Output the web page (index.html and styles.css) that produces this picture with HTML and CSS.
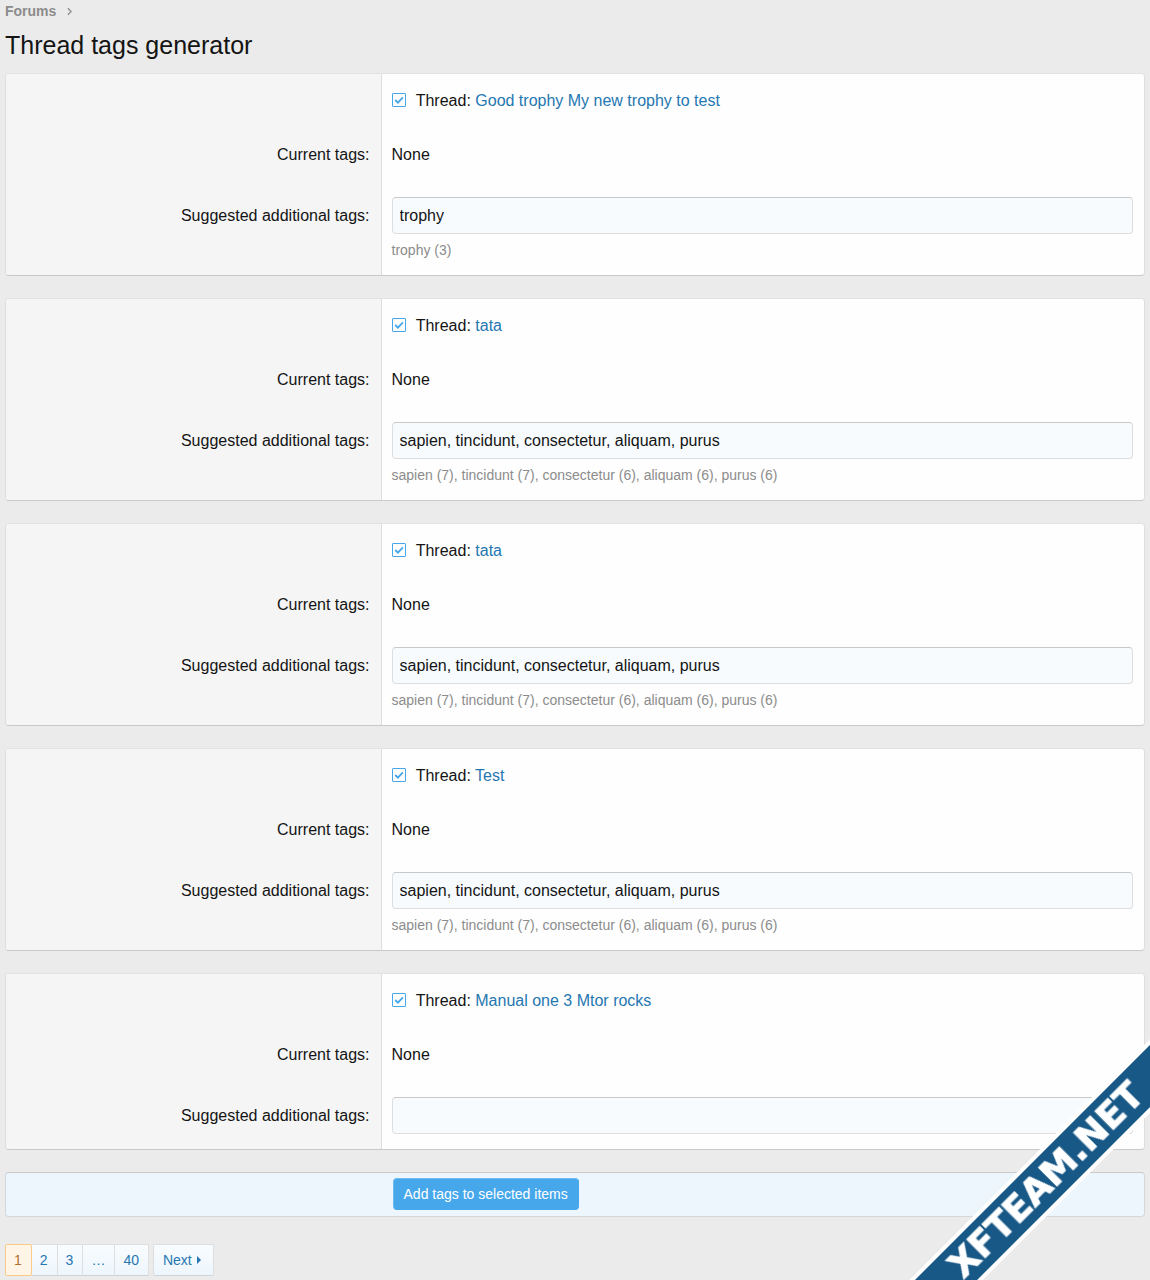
FILE: index.html
```html
<!DOCTYPE html>
<html lang="en">
<head>
<meta charset="UTF-8">
<meta name="viewport" content="width=device-width, initial-scale=1.0">
<title>Thread tags generator</title>
<link rel="stylesheet" href="styles.css">
</head>
<body>
<nav class="breadcrumb">
    <a href="#">Forums</a>
    <svg class="chevron" viewBox="0 0 6 10" aria-hidden="true"><path d="M1 1l4 4-4 4"/></svg>
</nav>
<h1 class="page-title">Thread tags generator</h1>

<form class="tag-form">
    <section class="block">
        <div class="row">
            <div class="row-label"></div>
            <div class="row-value">
                <input class="check" type="checkbox" id="thread1" checked>
                <label for="thread1">Thread: <a href="#">Good trophy My new trophy to test</a></label>
            </div>
        </div>
        <div class="row">
            <div class="row-label">Current tags:</div>
            <div class="row-value">None</div>
        </div>
        <div class="row row-input">
            <div class="row-label"><label for="tags1">Suggested additional tags:</label></div>
            <div class="row-value">
                <input class="input" type="text" id="tags1" value="trophy">
                <div class="hint">trophy (3)</div>
            </div>
        </div>
    </section>

    <section class="block">
        <div class="row">
            <div class="row-label"></div>
            <div class="row-value">
                <input class="check" type="checkbox" id="thread2" checked>
                <label for="thread2">Thread: <a href="#">tata</a></label>
            </div>
        </div>
        <div class="row">
            <div class="row-label">Current tags:</div>
            <div class="row-value">None</div>
        </div>
        <div class="row row-input">
            <div class="row-label"><label for="tags2">Suggested additional tags:</label></div>
            <div class="row-value">
                <input class="input" type="text" id="tags2" value="sapien, tincidunt, consectetur, aliquam, purus">
                <div class="hint">sapien (7), tincidunt (7), consectetur (6), aliquam (6), purus (6)</div>
            </div>
        </div>
    </section>

    <section class="block">
        <div class="row">
            <div class="row-label"></div>
            <div class="row-value">
                <input class="check" type="checkbox" id="thread3" checked>
                <label for="thread3">Thread: <a href="#">tata</a></label>
            </div>
        </div>
        <div class="row">
            <div class="row-label">Current tags:</div>
            <div class="row-value">None</div>
        </div>
        <div class="row row-input">
            <div class="row-label"><label for="tags3">Suggested additional tags:</label></div>
            <div class="row-value">
                <input class="input" type="text" id="tags3" value="sapien, tincidunt, consectetur, aliquam, purus">
                <div class="hint">sapien (7), tincidunt (7), consectetur (6), aliquam (6), purus (6)</div>
            </div>
        </div>
    </section>

    <section class="block">
        <div class="row">
            <div class="row-label"></div>
            <div class="row-value">
                <input class="check" type="checkbox" id="thread4" checked>
                <label for="thread4">Thread: <a href="#">Test</a></label>
            </div>
        </div>
        <div class="row">
            <div class="row-label">Current tags:</div>
            <div class="row-value">None</div>
        </div>
        <div class="row row-input">
            <div class="row-label"><label for="tags4">Suggested additional tags:</label></div>
            <div class="row-value">
                <input class="input" type="text" id="tags4" value="sapien, tincidunt, consectetur, aliquam, purus">
                <div class="hint">sapien (7), tincidunt (7), consectetur (6), aliquam (6), purus (6)</div>
            </div>
        </div>
    </section>

    <section class="block">
        <div class="row">
            <div class="row-label"></div>
            <div class="row-value">
                <input class="check" type="checkbox" id="thread5" checked>
                <label for="thread5">Thread: <a href="#">Manual one 3 Mtor rocks</a></label>
            </div>
        </div>
        <div class="row">
            <div class="row-label">Current tags:</div>
            <div class="row-value">None</div>
        </div>
        <div class="row row-input">
            <div class="row-label"><label for="tags5">Suggested additional tags:</label></div>
            <div class="row-value">
                <input class="input" type="text" id="tags5" value="">
            </div>
        </div>
    </section>

    <div class="submit-bar">
        <div></div>
        <div class="submit-cell"><button class="button" type="submit">Add tags to selected items</button></div>
    </div>
</form>

<nav class="pager">
    <div class="pages">
        <a class="page current" href="#">1</a>
        <a class="page" href="#">2</a>
        <a class="page" href="#">3</a>
        <a class="page" href="#">…</a>
        <a class="page" href="#">40</a>
    </div>
    <a class="next" href="#">Next <svg class="caret" viewBox="0 0 4 8" aria-hidden="true"><path d="M0 0l4 4-4 4z"/></svg></a>
</nav>

<div class="ribbon">XFTEAM.NET</div>
</body>
</html>
```
FILE: styles.css
```css
* {
    box-sizing: border-box;
}
body {
    margin: 0;
    padding: 0 5px;
    background: #ebebeb;
    color: #141414;
    font-family: "Liberation Sans", Arial, sans-serif;
    font-size: 16px;
    line-height: 22px;
}
a {
    color: #2577b1;
    text-decoration: none;
}

/* Header */
.breadcrumb {
    display: flex;
    align-items: center;
    gap: 11px;
    height: 22px;
    font-size: 14px;
    font-weight: bold;
}
.breadcrumb a {
    color: #8c8c8c;
}
.chevron {
    width: 5px;
    height: 9px;
    fill: none;
    stroke: #8c8c8c;
    stroke-width: 1.6;
}
.page-title {
    margin: 6px 0 11px;
    font-size: 25px;
    font-weight: normal;
    line-height: 34px;
}

/* Thread blocks */
.tag-form {
    display: flex;
    flex-direction: column;
    gap: 22px;
}
.block {
    border: 1px solid #dedede;
    border-top-color: #e2e2e2;
    border-bottom-color: #c9c9c9;
    border-radius: 4px;
    background: #fefefe;
    overflow: hidden;
}
.row {
    display: grid;
    grid-template-columns: 33% 1fr;
}
.row-label {
    padding: 16px 11px 16px 10px;
    border-right: 1px solid #dedede;
    background: #f5f5f5;
    text-align: right;
}
.row-value {
    padding: 16px 11px 16px 10px;
}
.row-input .row-label {
    padding-top: 23px;
}
.row-input .row-value {
    padding-top: 15px;
    padding-bottom: 15px;
}
.check {
    appearance: none;
    width: 14px;
    height: 14px;
    margin: 0 6px 0 0;
    border: 1px solid #47a7eb;
    border-radius: 1px;
    vertical-align: -1px;
}
.check:checked {
    background: url("data:image/svg+xml,%3Csvg xmlns='http://www.w3.org/2000/svg' viewBox='0 0 12 12'%3E%3Cpath d='M2.2 6l2.7 2.7 5-5.4' fill='none' stroke='%2347a7eb' stroke-width='1.8'/%3E%3C/svg%3E") center / 12px no-repeat;
}
.input {
    display: block;
    width: 100%;
    height: 37px;
    padding: 0 7px;
    border: 1px solid #dedede;
    border-top-color: #c9c9c9;
    border-radius: 4px;
    background: #f7fbfe;
    color: #141414;
    font: inherit;
}
.hint {
    margin-top: 6px;
    color: #8c8c8c;
    font-size: 14px;
    line-height: 20px;
}

/* Submit bar */
.submit-bar {
    display: grid;
    grid-template-columns: 33% 1fr;
    padding: 5px 0 6px;
    border: 1px solid #d5d8da;
    border-top-color: #c9c9c9;
    border-radius: 4px;
    background: #edf6fd;
}
.submit-cell {
    padding-left: 11px;
}
.button {
    display: block;
    height: 32px;
    padding: 0 10px;
    border: 1px solid #47a7eb;
    border-top-color: #6dbaf2;
    border-left-color: #6dbaf2;
    border-radius: 4px;
    background: #47a7eb;
    color: #fff;
    font-family: inherit;
    font-size: 14px;
}

/* Pager */
.pager {
    display: flex;
    gap: 4px;
    margin-top: 27px;
    font-size: 14px;
    line-height: 30px;
}
.pages {
    display: flex;
}
.page,
.next {
    padding: 0 9px 0 8px;
    border: 1px solid #dedede;
    border-bottom-color: #cfd3d6;
    border-radius: 2px;
    background: linear-gradient(#f9fcfe, #edf6fd);
}
.page + .page {
    border-left: 0;
    border-radius: 0;
}
.page.current {
    border-color: #fbc98a;
    background: #fff4e5;
    color: #b2702b;
}
.next {
    display: flex;
    align-items: center;
    gap: 5px;
    padding: 0 12px 0 9px;
}
.caret {
    width: 4px;
    height: 8px;
    fill: #2577b1;
}

/* Corner ribbon */
.ribbon {
    position: fixed;
    right: -96px;
    bottom: 74px;
    width: 400px;
    height: 52px;
    border: 4px solid #fff;
    background: #185886;
    color: #fff;
    font-family: "DejaVu Sans", sans-serif;
    font-size: 36px;
    font-weight: bold;
    line-height: 44px;
    text-align: center;
    -webkit-text-stroke: 1px #fff;
    transform: rotate(-45deg);
}
```
